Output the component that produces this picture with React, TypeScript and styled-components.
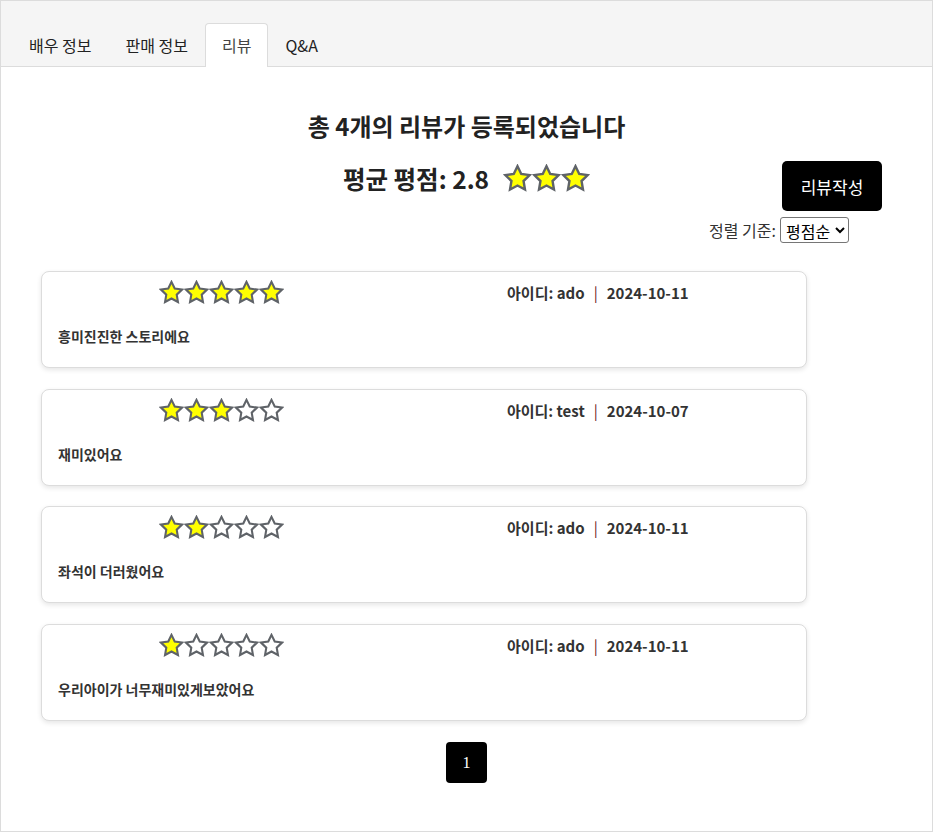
import React from "react";
import styled, { createGlobalStyle } from "styled-components";

const GlobalStyle = createGlobalStyle`
  html, body { margin: 0; padding: 0; background: #fff; }
  body { font-family: "Noto Sans CJK KR", "Noto Sans", sans-serif; color: #222; }
  * { box-sizing: border-box; }
`;

const Frame = styled.div`
  min-height: 100vh;
  border: 1px solid #dcdcdc;
  display: flex;
  flex-direction: column;
`;

const TabBar = styled.div`
  display: flex;
  background: #f5f5f5;
  border-bottom: 1px solid #dcdcdc;
  padding: 22px 11px 0;
`;

const Tab = styled.div<{ $active?: boolean }>`
  padding: 10px 16px 11px;
  font-size: 16px;
  line-height: 22px;
  color: ${(p) => (p.$active ? "#444" : "#222")};
  background: ${(p) => (p.$active ? "#fff" : "transparent")};
  border: 1px solid ${(p) => (p.$active ? "#dcdcdc" : "transparent")};
  border-bottom: none;
  border-radius: 4px 4px 0 0;
  margin-bottom: -1px;
  cursor: pointer;
`;

const Main = styled.div`
  display: flex;
  flex-direction: column;
  padding-bottom: 48px;
`;

const Title = styled.h2`
  margin: 43px 0 0;
  text-align: center;
  font-size: 24px;
  line-height: 32px;
  font-weight: 700;
  color: #222;
`;

const SummaryRow = styled.div`
  display: grid;
  grid-template-columns: 1fr auto 1fr;
  align-items: start;
  margin-top: 19px;
`;

const Average = styled.div`
  grid-column: 2;
  display: flex;
  align-items: center;
  gap: 14px;
  height: 34px;
  font-size: 24.5px;
  font-weight: 700;
  color: #222;
`;

const WriteButton = styled.button`
  grid-column: 3;
  justify-self: end;
  margin-right: 50px;
  width: 100px;
  height: 50px;
  background: #000;
  color: #fff;
  border: none;
  border-radius: 5px;
  font-family: "Noto Sans CJK KR", sans-serif;
  font-size: 17px;
  font-weight: 400;
  cursor: pointer;
`;

const SortRow = styled.div`
  display: flex;
  justify-content: flex-end;
  align-items: center;
  gap: 4px;
  margin-top: 6px;
  padding-right: 83px;
  font-size: 16px;
  color: #333;
`;

const Select = styled.select`
  height: 26px;
  font-family: "Noto Sans CJK KR", sans-serif;
  font-size: 16px;
  color: #000;
  border: 1px solid #767676;
  border-radius: 3px;
  background: #fff;
  padding: 0 1px;
`;

const CardList = styled.div`
  display: flex;
  flex-direction: column;
  gap: 20.7px;
  margin: 28px 0 0 40px;
  width: 766px;
`;

const Card = styled.div`
  border: 1px solid #dcdcdc;
  border-radius: 8px;
  box-shadow: 0 2px 5px rgba(0, 0, 0, 0.1);
  padding: 8px 16px 21px;
  background: #fff;
`;

const CardHead = styled.div`
  display: flex;
  justify-content: space-around;
  align-items: center;
  height: 25px;
  margin: 0 -16px;
  padding-right: 6px;
`;

const StarRow = styled.div<{ $offset?: number }>`
  display: flex;
  margin-left: ${(p) => p.$offset ?? 0}px;
`;

const Author = styled.div`
  font-size: 15px;
  font-weight: 700;
  color: #333;
  display: flex;
  align-items: center;
`;

const Sep = styled.span`
  color: #6b2222;
  font-weight: 400;
  margin: 0 9px;
`;

const Content = styled.p`
  margin: 21px 0 0;
  font-size: 14px;
  line-height: 20px;
  font-weight: 700;
  color: #333;
`;

const Pagination = styled.div`
  display: flex;
  justify-content: center;
  margin-top: 21px;
`;

const PageButton = styled.button`
  width: 41px;
  height: 41px;
  background: #000;
  color: #fff;
  border: none;
  border-radius: 4px;
  font-family: "Liberation Serif", serif;
  font-size: 16px;
  cursor: pointer;
`;

const STAR =
  "M12 1.8l3.1 6.4 7 1-5.1 4.9 1.2 7L12 17.8l-6.2 3.3 1.2-7L1.9 9.2l7-1z";

function Star({ filled, size }: { filled: boolean; size: number }) {
  return (
    <svg width={size} height={size} viewBox="0 0 24 24">
      <path
        d={STAR}
        fill={filled ? "#ffff00" : "#ffffff"}
        stroke="#5f6368"
        strokeWidth={2}
        strokeLinejoin="miter"
      />
    </svg>
  );
}

function Stars({
  value,
  count,
  size,
  offset,
}: {
  value: number;
  count: number;
  size: number;
  offset?: number;
}) {
  return (
    <StarRow $offset={offset}>
      {Array.from({ length: count }).map((_, i) => (
        <Star key={i} filled={i < value} size={size} />
      ))}
    </StarRow>
  );
}

const reviews = [
  { rating: 5, id: "ado", date: "2024-10-11", text: "흥미진진한 스토리에요" },
  { rating: 3, id: "test", date: "2024-10-07", text: "재미있어요" },
  { rating: 2, id: "ado", date: "2024-10-11", text: "좌석이 더러웠어요" },
  { rating: 1, id: "ado", date: "2024-10-11", text: "우리아이가 너무재미있게보았어요" },
];

export default function App() {
  return (
    <>
      <GlobalStyle />
      <Frame>
        <TabBar>
          <Tab>배우 정보</Tab>
          <Tab>판매 정보</Tab>
          <Tab $active>리뷰</Tab>
          <Tab>Q&amp;A</Tab>
        </TabBar>
        <Main>
          <Title>총 4개의 리뷰가 등록되었습니다</Title>
          <SummaryRow>
            <Average>
              <span>평균 평점: 2.8</span>
              <Stars value={3} count={3} size={29} />
            </Average>
            <WriteButton>리뷰작성</WriteButton>
          </SummaryRow>
          <SortRow>
            <span>정렬 기준:</span>
            <Select defaultValue="rating">
              <option value="rating">평점순</option>
              <option value="date">최신순</option>
            </Select>
          </SortRow>
          <CardList>
            {reviews.map((r, i) => (
              <Card key={i}>
                <CardHead>
                  <Stars value={r.rating} count={5} size={25} offset={6} />
                  <Author>
                    아이디: {r.id}
                    <Sep>|</Sep>
                    {r.date}
                  </Author>
                </CardHead>
                <Content>{r.text}</Content>
              </Card>
            ))}
          </CardList>
          <Pagination>
            <PageButton>1</PageButton>
          </Pagination>
        </Main>
      </Frame>
    </>
  );
}
